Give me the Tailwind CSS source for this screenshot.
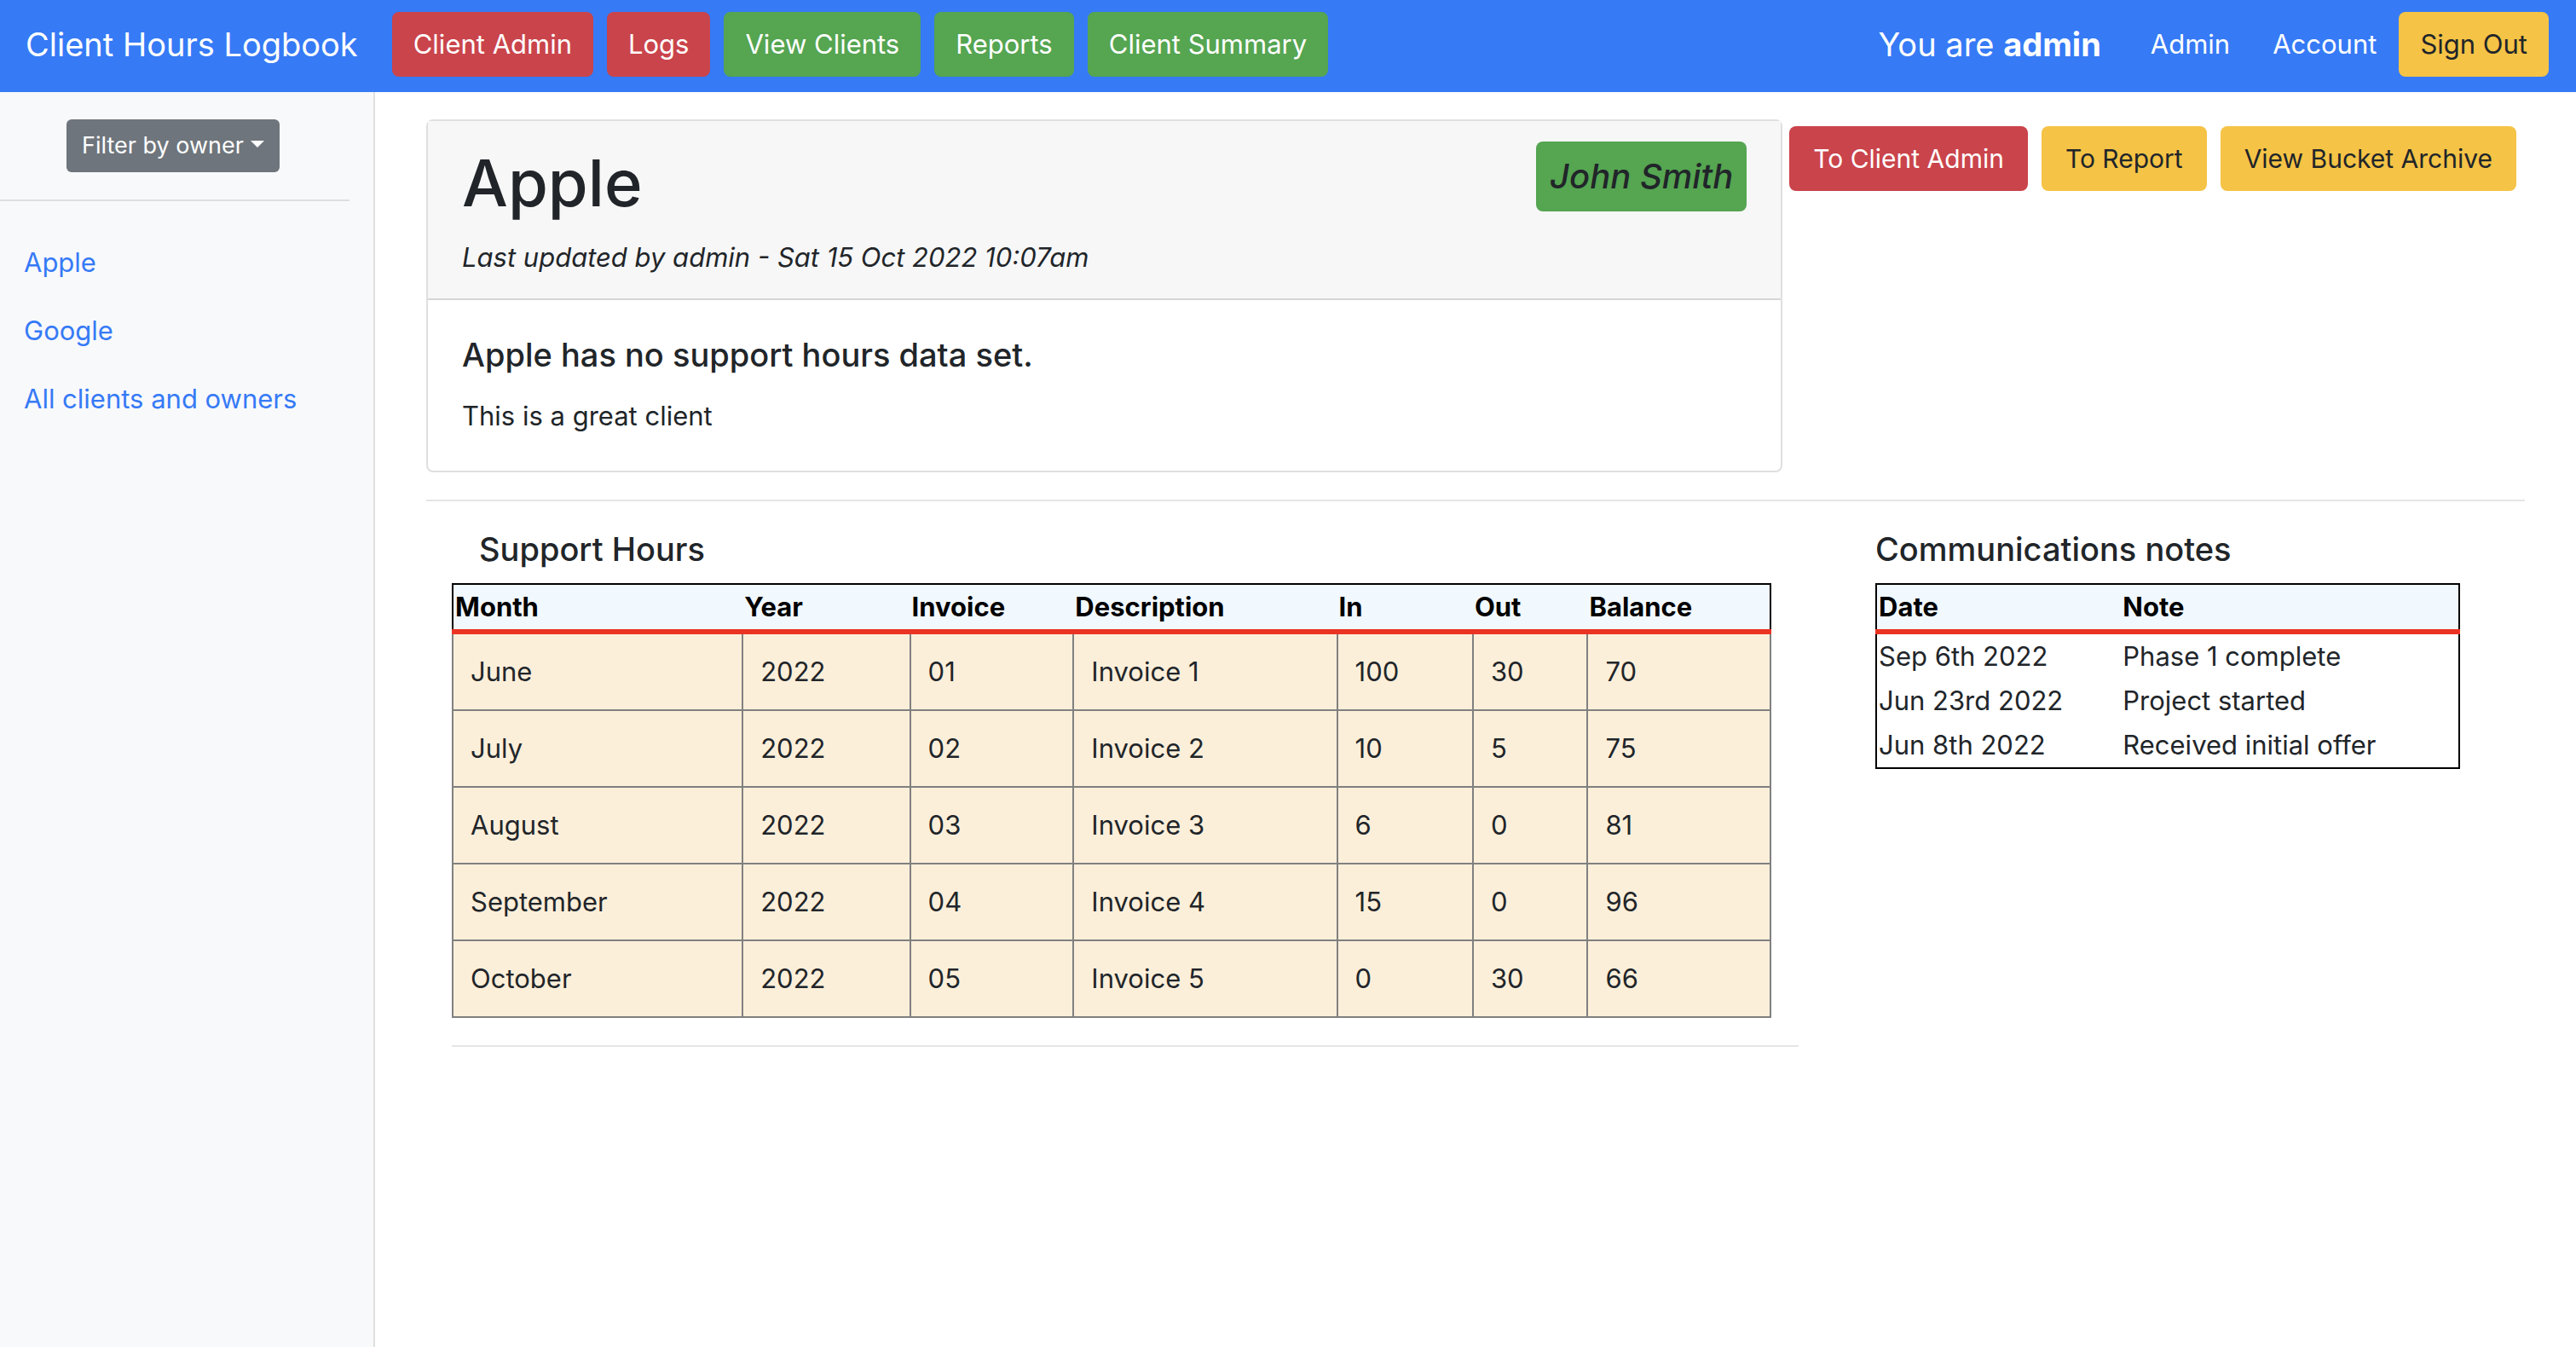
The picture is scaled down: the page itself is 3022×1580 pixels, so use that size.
<!DOCTYPE html>
<html lang="en">
<head>
<meta charset="utf-8">
<title>Client Hours Logbook</title>
<script src="https://cdn.jsdelivr.net/npm/@tailwindcss/browser@4"></script>
</head>
<body class="flex min-h-screen flex-col bg-white font-['Inter',sans-serif] text-[31px] leading-[48px] text-[#212529]">
  <header class="flex h-[108px] items-center justify-between bg-[#367af6] pr-8 pl-[30px] pb-1 text-white">
    <div class="flex items-center">
      <a href="#" class="mr-10 text-[38px] leading-[60px]">Client Hours Logbook</a>
      <nav class="flex gap-4">
        <a href="#" class="rounded-lg bg-[#ca444b] px-[25px] py-[14px]">Client Admin</a>
        <a href="#" class="rounded-lg bg-[#ca444b] px-[25px] py-[14px]">Logs</a>
        <a href="#" class="rounded-lg bg-[#55a551] px-[25px] py-[14px]">View Clients</a>
        <a href="#" class="rounded-lg bg-[#55a551] px-[25px] py-[14px]">Reports</a>
        <a href="#" class="rounded-lg bg-[#55a551] px-[25px] py-[14px]">Client Summary</a>
      </nav>
    </div>
    <div class="flex items-center">
      <span class="mr-[58px] text-[38px] leading-[60px]">You are <b>admin</b></span>
      <a href="#" class="mr-[50px]">Admin</a>
      <a href="#" class="mr-[26px]">Account</a>
      <button type="button" class="rounded-lg bg-[#f5c346] px-[25px] py-[14px] text-[#212529]">Sign Out</button>
    </div>
  </header>

  <div class="flex flex-1">
    <aside class="w-[440px] shrink-0 border-r-2 border-[#dfdfdf] bg-[#f8f9fb] pt-8 pr-7">
      <div class="flex justify-center border-b-2 border-[#dfdfdf] pr-1 pb-8">
        <button type="button" aria-haspopup="true" class="flex h-[62px] items-center gap-2 rounded-md bg-[#6e757c] px-[18px] text-[27px] leading-[42px] text-white">
          Filter by owner
          <svg class="mb-1 h-2 w-4" viewBox="0 0 16 8" fill="currentColor" aria-hidden="true"><path d="M0 0h16L8 8z"/></svg>
        </button>
      </div>
      <nav class="mt-12 flex flex-col gap-8 pl-7 text-[#367af6]">
        <a href="#">Apple</a>
        <a href="#">Google</a>
        <a href="#">All clients and owners</a>
      </nav>
    </aside>

    <main class="min-w-0 flex-1 px-[60px] pt-8">
      <div class="flex items-start gap-2">
        <article class="flex-1 rounded-lg border-2 border-[#dfdfdf]">
          <header class="flex items-start justify-between border-b-2 border-[#d6d6d6] bg-[#f7f7f7] px-10 pt-6 pb-6">
            <div>
              <h1 class="mb-4 text-[76px] leading-[96px] font-medium">Apple</h1>
              <p class="italic">Last updated by admin - Sat 15 Oct 2022 10:07am</p>
            </div>
            <span class="rounded-lg bg-[#55a551] px-4 py-[17px] text-[40px] leading-[48px] font-medium italic">John Smith</span>
          </header>
          <div class="px-10 pt-10 pb-10">
            <h2 class="mb-6 text-[38px] leading-[48px] font-medium">Apple has no support hours data set.</h2>
            <p>This is a great client</p>
          </div>
        </article>
        <div class="flex gap-4 pt-2 pr-[10px] text-[30px]">
          <a href="#" class="rounded-lg bg-[#ca444b] px-7 py-[14px] text-white">To Client Admin</a>
          <a href="#" class="rounded-lg bg-[#f5c346] px-7 py-[14px]">To Report</a>
          <a href="#" class="rounded-lg bg-[#f5c346] px-7 py-[14px]">View Bucket Archive</a>
        </div>
      </div>

      <hr class="my-8 border-t-2 border-[#e5e5e5]">

      <div class="grid grid-cols-[1610fr_852fr] items-start">
        <section class="pl-[30px]">
          <h2 class="mb-4 pl-8 text-[38px] leading-[48px] font-medium">Support Hours</h2>
          <table class="w-[98%] table-fixed text-left">
            <colgroup>
              <col class="w-[22%]"><col class="w-[12.7%]"><col class="w-[12.4%]"><col class="w-[20%]"><col class="w-[10.3%]"><col class="w-[8.7%]"><col>
            </colgroup>
            <thead class="border-2 border-b-[6px] border-black border-b-[#eb3323] bg-[#f1f8fe] text-black">
              <tr>
                <th class="p-[2px]">Month</th><th class="p-[2px]">Year</th><th class="p-[2px]">Invoice</th><th class="p-[2px]">Description</th><th class="p-[2px]">In</th><th class="p-[2px]">Out</th><th class="p-[2px]">Balance</th>
              </tr>
            </thead>
            <tbody class="bg-[#fcefda] [&_td]:border-2 [&_td]:border-[#808080] [&_td]:p-5">
              <tr><td>June</td><td>2022</td><td>01</td><td>Invoice 1</td><td>100</td><td>30</td><td>70</td></tr>
              <tr><td>July</td><td>2022</td><td>02</td><td>Invoice 2</td><td>10</td><td>5</td><td>75</td></tr>
              <tr><td>August</td><td>2022</td><td>03</td><td>Invoice 3</td><td>6</td><td>0</td><td>81</td></tr>
              <tr><td>September</td><td>2022</td><td>04</td><td>Invoice 4</td><td>15</td><td>0</td><td>96</td></tr>
              <tr><td>October</td><td>2022</td><td>05</td><td>Invoice 5</td><td>0</td><td>30</td><td>66</td></tr>
            </tbody>
          </table>
          <hr class="my-8 border-t-2 border-[#e5e5e5]">
        </section>

        <section class="pr-[76px] pl-[90px]">
          <h2 class="mb-4 text-[38px] leading-[48px] font-medium">Communications notes</h2>
          <table class="w-full table-fixed border-2 border-black text-left">
            <colgroup><col class="w-[42%]"><col></colgroup>
            <thead class="border-b-[6px] border-[#eb3323] bg-[#f1f8fe] text-black">
              <tr><th class="p-[2px]">Date</th><th class="p-[2px]">Note</th></tr>
            </thead>
            <tbody class="[&_td]:p-[2px]">
              <tr><td>Sep 6th 2022</td><td>Phase 1 complete</td></tr>
              <tr><td>Jun 23rd 2022</td><td>Project started</td></tr>
              <tr><td>Jun 8th 2022</td><td>Received initial offer</td></tr>
            </tbody>
          </table>
        </section>
      </div>
    </main>
  </div>
</body>
</html>
